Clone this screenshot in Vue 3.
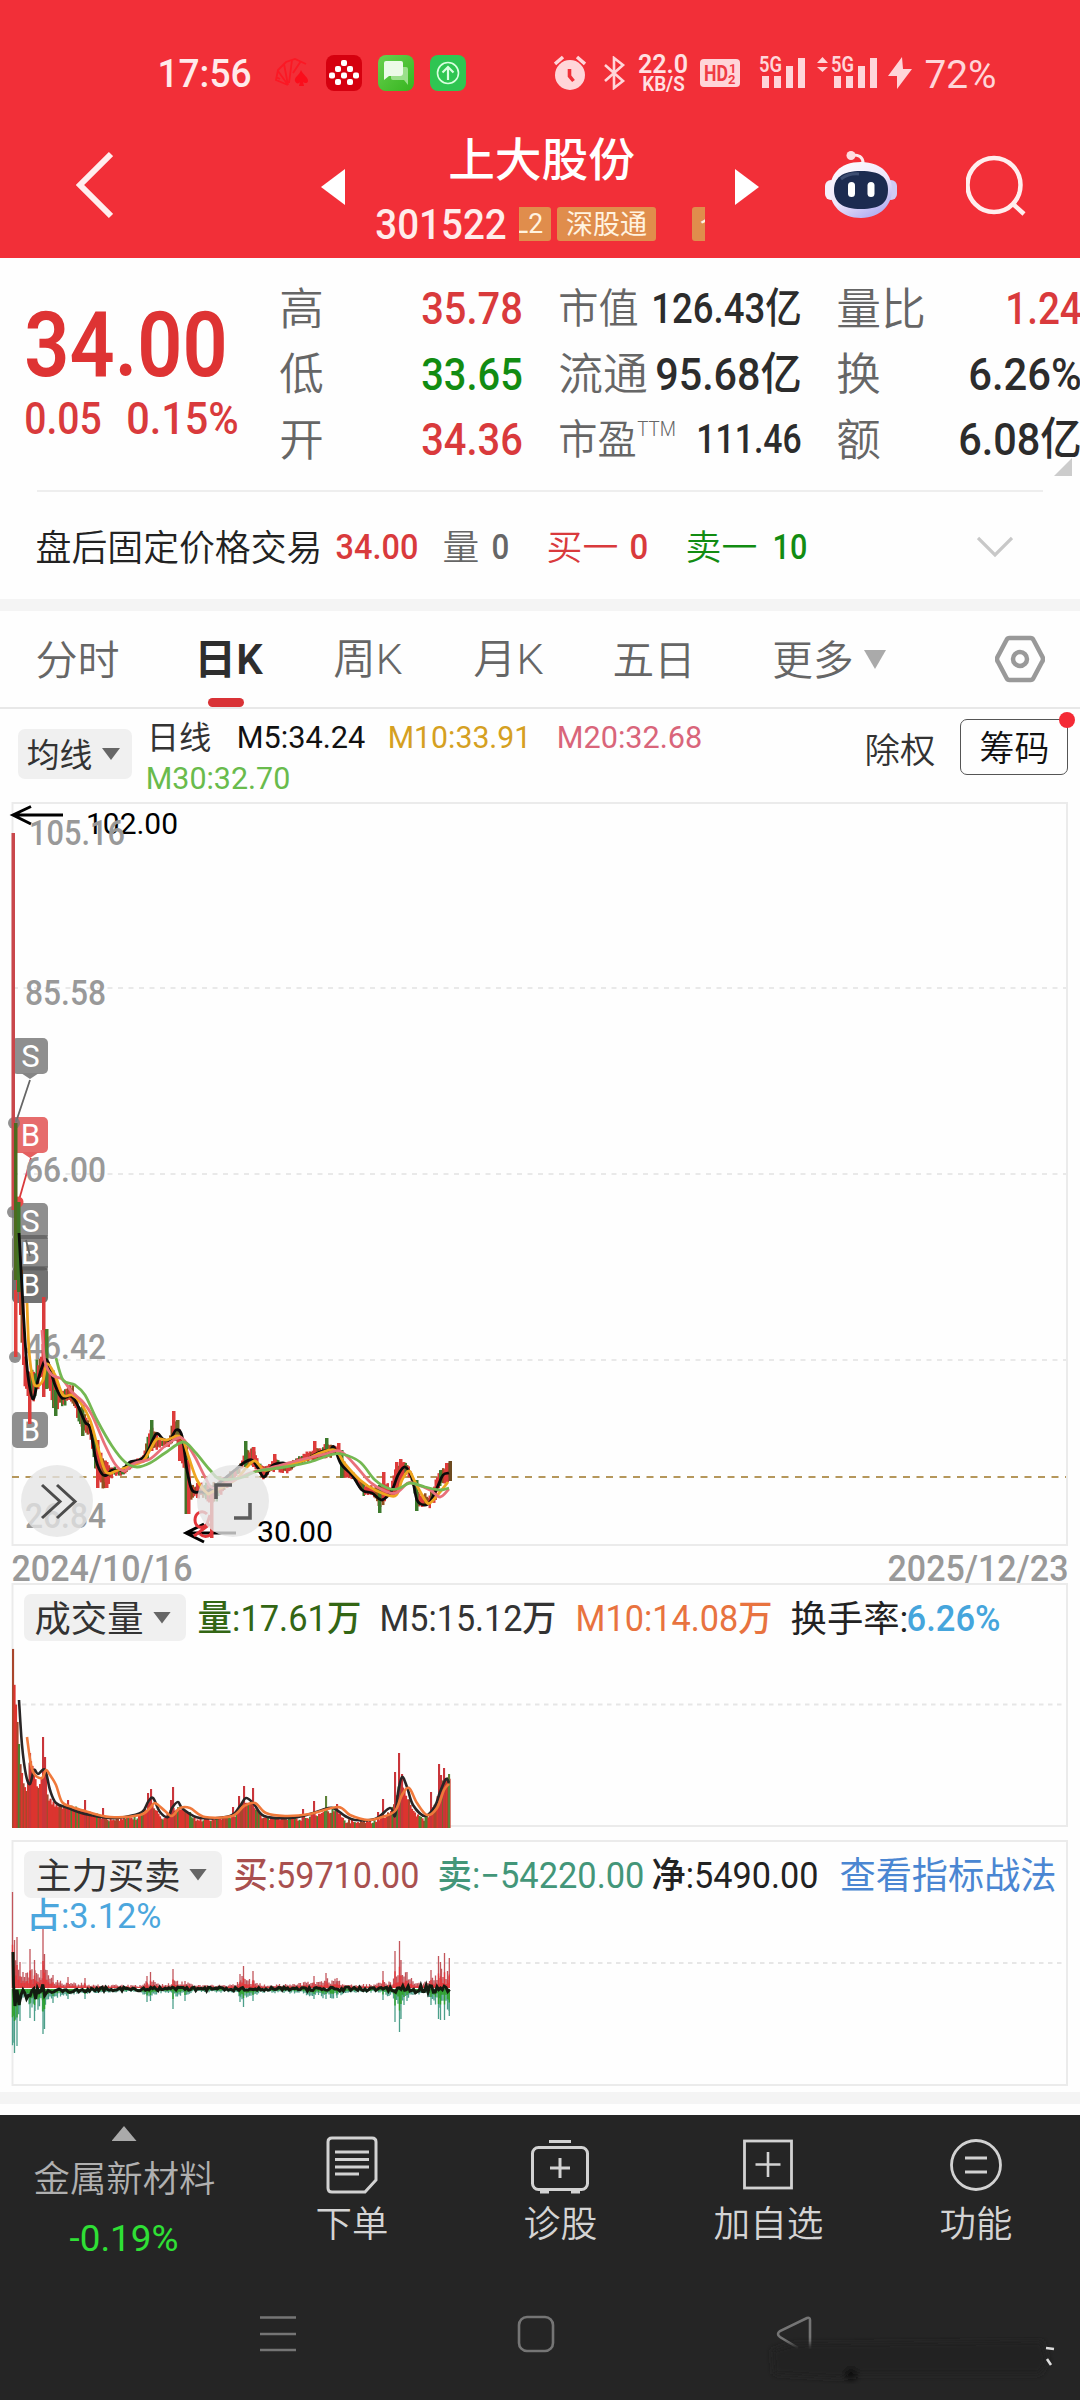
<script setup>
import { h } from 'vue'

// Text run fitted to an exact ink width (condensed DIN-like numerals).
const T = (p) => {
  const latin = /[0-9A-Za-z]/.test(p.v)
  const pad = p.s * 0.04
  return h('svg', { class: 'fit', width: p.w, height: p.s, style: { display: 'block', overflow: 'visible', flex: 'none' } }, [
    h('text', {
      x: -pad, y: p.s * (latin ? 0.856 : 0.88), 'font-size': p.s, fill: p.c || 'currentColor',
      'font-weight': p.b || 400, textLength: +p.w + pad * 2, lengthAdjust: 'spacingAndGlyphs',
    }, p.v),
  ])
}
T.props = ['w', 's', 'v', 'c', 'b']

const RED = '#d93a3c'
const GREEN = '#128c12'
const DARK = '#2c2c2c'

const tools = [
  { name: '下单', w: 70 }, { name: '诊股', w: 71 }, { name: '加自选', w: 107 }, { name: '功能', w: 70 },
]

let seed = 11
const rnd = () => { seed = (seed * 16807) % 2147483647; return seed / 2147483647 }
const pts = (s) => s.split(' ').map((p) => p.split(',').map(Number))
const at = (a, x) => {
  for (let i = 1; i < a.length; i++) {
    if (x <= a[i][0]) {
      const [x0, y0] = a[i - 1], [x1, y1] = a[i]
      return y0 + ((y1 - y0) * Math.max(0, x - x0)) / (x1 - x0)
    }
  }
  return a[a.length - 1][1]
}
const smooth = (s) => {
  const a = pts(s)
  let d = `M${a[0]}`
  for (let i = 0; i < a.length - 1; i++) {
    const p0 = a[i - 1] || a[i], p1 = a[i], p2 = a[i + 1], p3 = a[i + 2] || p2
    d += `C${p1[0] + (p2[0] - p0[0]) / 6},${p1[1] + (p2[1] - p0[1]) / 6} ${p2[0] - (p3[0] - p1[0]) / 6},${p2[1] - (p3[1] - p1[1]) / 6} ${p2}`
  }
  return d
}

const ma5 = '19,1233 21,1270 25,1340 28,1376 33,1399 38,1380 44,1362 48,1362 55,1385 62,1398 70,1396 76,1402 85,1422 90,1428 96,1460 102,1474 107,1475 112,1470 122,1470 130,1462 140,1460 147,1453 156,1434 163,1439 170,1440 176,1430 182,1436 187,1470 192,1490 200,1492 210,1490 235,1470 245,1462 252,1460 258,1468 264,1477 272,1466 283,1463 292,1466 305,1460 320,1452 330,1450 334,1447 341,1464 352,1475 362,1490 372,1493 382,1500 392,1490 398,1475 405,1467 412,1478 417,1500 424,1505 430,1502 437,1488 443,1475 449,1473'
const maLines = [
  { c: '#0b0b0b', d: smooth(ma5) },
  { c: '#efa51f', d: smooth('27,1303 29,1350 33,1380 37,1386 43,1380 47,1364 55,1375 63,1395 72,1395 80,1402 90,1420 98,1448 106,1472 116,1471 130,1466 143,1461 150,1450 157,1439 167,1440 177,1436 183,1440 189,1458 197,1480 207,1493 212,1492 235,1480 247,1467 255,1461 264,1470 275,1468 300,1462 320,1453 335,1450 345,1464 360,1480 375,1490 395,1496 402,1480 409,1471 415,1482 425,1500 430,1503 440,1492 448,1482') },
  { c: '#e9707a', d: smooth('42,1330 45,1362 52,1375 62,1379 72,1392 82,1401 92,1415 105,1445 115,1464 124,1471 135,1463 150,1459 165,1446 178,1438 184,1440 195,1457 205,1477 213,1488 230,1482 250,1473 270,1468 300,1460 325,1454 340,1451 355,1465 370,1482 385,1491 396,1493 408,1483 415,1484 430,1490 440,1497 449,1489') },
  { c: '#74b852', d: smooth('56,1358 63,1380 75,1385 85,1395 97,1420 112,1446 125,1462 137,1467 150,1463 165,1453 183,1442 195,1452 210,1470 220,1479 240,1478 258,1471 285,1467 310,1462 330,1455 342,1454 360,1462 375,1480 390,1489 400,1488 410,1483 425,1487 440,1490 449,1488') },
]

const top = pts('17,1230 20,1250 22,1300 24,1360 30,1372 36,1358 41,1340 45,1345 50,1365 60,1388 71,1382 76,1400 88,1420 95,1440 103,1452 108,1465 120,1468 130,1460 142,1454 148,1430 152,1421 157,1438 168,1440 172,1414 177,1422 183,1440 190,1484 205,1480 215,1482 228,1471 238,1468 245,1445 253,1448 258,1462 266,1466 274,1456 285,1463 296,1457 308,1450 314,1445 320,1448 326,1440 332,1444 339,1446 344,1464 354,1474 364,1484 375,1486 382,1478 390,1486 394,1464 400,1460 407,1462 412,1478 418,1490 428,1494 433,1482 439,1468 445,1462 451,1461')
const bot = pts('17,1300 20,1340 23,1390 28,1406 33,1402 38,1390 44,1382 48,1402 54,1412 62,1408 72,1404 80,1432 88,1436 94,1470 98,1489 106,1488 112,1476 124,1476 132,1466 144,1462 156,1450 170,1446 176,1444 180,1460 184,1476 190,1500 200,1498 210,1504 214,1505 224,1492 240,1470 252,1466 262,1482 270,1472 287,1474 296,1464 310,1462 330,1458 336,1456 342,1478 354,1480 362,1496 372,1496 379,1510 386,1500 396,1494 404,1474 411,1482 416,1509 424,1509 432,1508 438,1492 451,1480')
const candles = []
for (let x = 16; x < 449; x += 1.5) {
  const t = at(top, x), b = at(bot, x), r = b - t
  const y = t + r * 0.3 * rnd()
  const e = b - r * 0.3 * rnd()
  const k = rnd()
  candles.push({ x, y, hh: Math.max(5, e - y), c: k < 0.62 ? '#db3a3a' : k < 0.8 ? '#93501f' : '#3d7a2c' })
}
const spikes = [
  [11.5, 833, 377, '#c9474b'], [14, 1123, 157, '#4c6b1f'], [14, 1290, 67, '#e0403d'], [17, 1202, 90, '#3f7526'],
  [42, 1297, 100, '#d93b3b'], [45, 1329, 60, '#4a7d2c'], [28, 1396, 28, '#dd3b3a'], [54, 1390, 26, '#3d7a2c'],
  [81, 1405, 31, '#4a7028'], [96, 1440, 48, '#dd3b3a'], [105, 1462, 26, '#dd3b3a'], [150, 1420, 28, '#3d7a2c'],
  [172, 1411, 28, '#dd3b3a'], [176, 1420, 18, '#6d6a2a'], [178, 1440, 21, '#dd3b3a'], [184.5, 1446, 68, '#4a7028'],
  [187, 1460, 54, '#dd3b3a'], [210, 1490, 48, '#dd3b3a'], [244, 1441, 26, '#3d7a2c'], [252, 1447, 20, '#dd3b3a'],
  [273, 1454, 16, '#dd3b3a'], [313, 1441, 18, '#dd3b3a'], [325, 1438, 16, '#3d7a2c'], [337, 1443, 16, '#dd3b3a'],
  [340, 1450, 28, '#3d7a2c'], [378, 1485, 28, '#3d7a2c'], [382, 1472, 28, '#dd3b3a'], [415, 1480, 31, '#3d7a2c'],
  [395, 1462, 30, '#dd3b3a'], [399, 1459, 22, '#dd3b3a'], [445, 1463, 16, '#dd3b3a'], [448.5, 1461, 20, '#6c4a20'],
]

const volEnv = pts('13,1646 15,1693 17,1714 19,1742 21,1768 24,1782 27,1786 30,1758 34,1768 38,1785 42,1776 45,1767 48,1795 55,1803 62,1804 70,1804 90,1811 110,1817 135,1816 143,1810 150,1800 156,1808 163,1818 170,1810 176,1805 184,1806 196,1817 225,1816 235,1812 243,1800 252,1802 262,1815 300,1816 320,1811 335,1807 345,1818 370,1820 385,1815 394,1804 400,1780 405,1790 415,1812 425,1817 435,1804 442,1780 449,1775')
const volSpikes = { 43: 1737, 45: 1757, 30: 1753, 68: 1800, 85: 1800, 103: 1808, 148: 1793, 151: 1789, 173: 1787, 171: 1800, 239: 1796, 244: 1786, 253: 1788, 233: 1807, 314: 1801, 326: 1796, 337: 1804, 303: 1809, 383: 1799, 378: 1812, 395: 1772, 399: 1753, 402: 1774, 431: 1792, 439: 1764, 441: 1775, 444: 1768, 449: 1774 }
const vols = []
for (let x = 12; x < 449; x += 1.5) {
  const y = at(volEnv, x + 1) + rnd() * (x < 48 ? 6 : 5)
  const k = rnd()
  vols.push({ x, y, c: k < 0.55 ? '#dc342f' : k < 0.82 ? '#a9462c' : '#4d8130' })
}
Object.entries(volSpikes).forEach(([x, y]) => vols.push({ x: x - 1, y, c: x === '326' || x === '449' ? '#5d8238' : '#c9353a' }))
const volLines = [
  { c: '#2a2626', d: smooth('19,1700 22,1745 26,1775 30,1784 34,1770 38,1774 45,1770 50,1790 56,1803 68,1808 85,1814 110,1818 125,1817 142,1812 148,1802 153,1798 160,1812 168,1817 172,1808 178,1802 183,1809 200,1818 230,1816 240,1806 246,1798 254,1804 264,1816 290,1818 310,1814 322,1810 333,1808 345,1816 355,1820 375,1819 390,1808 395,1816 398,1793 402,1777 407,1787 413,1805 425,1816 435,1806 440,1792 446,1779 449,1783') },
  { c: '#f0793b', d: smooth('27,1737 31,1765 35,1775 42,1778 46,1770 50,1775 56,1785 62,1802 72,1807 85,1811 110,1817 140,1815 150,1808 155,1803 165,1811 172,1816 180,1808 190,1808 205,1817 232,1816 244,1806 255,1803 266,1813 285,1816 310,1814 338,1807 350,1815 368,1820 382,1817 395,1811 402,1795 409,1788 417,1803 427,1815 437,1808 444,1790 449,1784') },
]

const flowEnv = pts('13,60 16,45 20,24 26,17 30,20 36,24 41,22 45,28 49,12 56,9 75,6 100,4 140,3 146,8 152,9 160,4 170,6 175,8 185,7 195,3 235,4 242,12 252,9 262,4 300,5 312,8 328,10 338,9 345,4 375,4 384,7 392,8 397,16 403,20 410,11 420,6 430,9 438,20 445,22 450,22')
const flowSpikes = [[12.5, 96, 55], [14.5, 48, 64], [17, 51, 57], [20, 26, 32], [30, 39, 29], [34.5, 28, 32], [43, 60, 45], [44.5, 34, 40], [53, 13, 14], [68, 11, 10], [85, 10, 10], [147, 12, 13], [150.5, 16, 12], [173, 19, 20], [185, 7, 12], [240, 14, 13], [243.5, 22, 18], [253, 17, 12], [314, 12, 10], [326, 15, 10], [337, 10, 9], [383, 17, 11], [395, 37, 33], [399.5, 47, 43], [401, 28, 30], [407, 16, 12], [431, 18, 16], [438.5, 32, 30], [440.5, 26, 31], [444.5, 35, 31], [449.3, 30, 27]]
const flows = []
for (let x = 12.5; x < 450; x += 1.5) {
  const e = at(flowEnv, x)
  flows.push([x, e * (0.4 + 0.6 * rnd()), e * (0.4 + 0.6 * rnd())])
}
flows.push(...flowSpikes)
const up = flows.map(([x, u]) => `M${x} 1988v${-u}`).join('')
const down = flows.map(([x, , d]) => `M${x} 1989v${d}`).join('')
const upIn = flows.map(([x, u]) => `M${x} 1988v${-u * 0.45}`).join('')
const downIn = flows.map(([x, , d]) => `M${x} 1989v${d * 0.5}`).join('')
let net = 'M13 1952L13.500 1985L15 2006L17 1990L19 2005L21 1995'
for (let x = 23; x < 450; x += 1.8) {
  const a = x < 48 ? 10 : x > 385 ? 5 : 2.4
  net += `L${x.toFixed(1)} ${((x < 90 ? 1991 : 1989) + (rnd() - 0.5) * a * 1.6).toFixed(1)}`
}

const marks = [
  { t: 'S', y: 1038, f: '#858585' }, { t: 'B', y: 1117, f: '#e45f5f' }, { t: 'S', y: 1203, f: '#858585' },
  { t: 'B', y: 1235, f: '#7d7d7d' }, { t: 'B', y: 1267, f: '#666' }, { t: 'B', y: 1412, f: '#858585' },
]
const axis = [['105.16', 29, 845, 96], ['85.58', 25, 1005, 81], ['66.00', 25, 1182, 81], ['46.42', 25, 1359, 81], ['26.84', 25, 1528, 81]]
</script>

<template>
  <div class="page">
    <header class="head">
      <div class="status">
        <div class="st-left">
          <T v="17:56" w="91" s="38" b="500" c="#ffeaea" />
          <svg width="36" height="32" viewBox="0 0 36 32" fill="none" stroke="#fb1824" stroke-width="1.800"><path d="M14 28L2 23l2-10 8-8 9-3 11 5M14 28L4 14M14 28L10 7M15 26L18 3M19 16L27 4M2 20l4 2" /><path d="M27 13c-2 6-7 7-6 11 1 3 4 3 5 1l-1 4h5l-1-4c2 2 5 1 5-1 0-4-5-6-7-11z" fill="#fb0d1b" stroke="none" /></svg>
          <svg width="36" height="36" viewBox="0 0 36 36"><rect width="36" height="36" rx="8" fill="#d5000f" /><g fill="#fff"><rect x="15" y="5" width="6" height="6" rx="2" /><rect x="9" y="11" width="6" height="6" rx="2" /><rect x="21" y="11" width="6" height="6" rx="2" /><rect x="3" y="17.500" width="6" height="6" rx="2" /><rect x="15" y="17.500" width="6" height="6" rx="2" /><rect x="27" y="17.500" width="6" height="6" rx="2" /><rect x="9" y="24" width="6" height="6" rx="2" /><rect x="21" y="24" width="6" height="6" rx="2" /></g></svg>
          <svg width="36" height="36" viewBox="0 0 36 36"><defs><linearGradient id="msg" x2="1" y2="1"><stop stop-color="#6ad04f" /><stop offset="1" stop-color="#35b51f" /></linearGradient></defs><rect width="36" height="36" rx="8" fill="url(#msg)" /><path d="M13 12h15q2 0 2 2v16l-4-5H15q-2 0-2-2z" fill="#9be08b" /><path d="M8 6h15q2 0 2 2v10q0 3-3 3H11l-5 4V8q0-2 2-2z" fill="#ecfbe8" /></svg>
          <svg width="36" height="36" viewBox="0 0 36 36"><rect width="36" height="36" rx="8" fill="#2fc552" /><g fill="none" stroke="#d9ffe0" stroke-width="1.600"><circle cx="18" cy="18" r="10.500" /><path d="M18 25V12M12.500 17.500L18 12l5.500 5.500" stroke-width="2.200" /></g></svg>
        </div>
        <div class="st-right">
          <svg width="32" height="36" viewBox="0 0 32 36"><circle cx="16" cy="20" r="15" fill="#ffd5d9" /><path d="M1 9l8-7M31 9l-8-7" stroke="#ffd5d9" stroke-width="3.500" /><path d="M15.500 14v7l4 5" stroke="#f02f38" stroke-width="3.600" fill="none" /></svg>
          <svg class="bt" width="22" height="34" viewBox="0 0 22 34" fill="none" stroke="#ffd5d9" stroke-width="2.600"><path d="M1 9l18 16-9 7V2l9 7L1 25" /></svg>
          <div class="net"><T v="22.0" w="48" s="26" b="600" c="#ffe0e2" /><T v="KB/S" w="41" s="20" b="600" c="#ffe0e2" /></div>
          <svg class="hd" width="40" height="28" viewBox="0 0 40 28"><rect width="40" height="28" rx="4" fill="#ffd5d9" /><g fill="#ef3b44" font-weight="700"><text x="4" y="22" font-size="22" textLength="24" lengthAdjust="spacingAndGlyphs">HD</text><text x="29" y="14" font-size="13">1</text><text x="28" y="25" font-size="13">2</text></g></svg>
          <svg class="sig" width="46" height="34" viewBox="0 0 46 34" fill="#ffd5d9"><text x="0" y="15.500" font-size="21.500" font-weight="600" textLength="23" lengthAdjust="spacingAndGlyphs">5G</text><path d="M3 20h7v12H3zM15 20h7v12h-7zM27 14l0-4h7v22h-7zM39 2h7v30h-7z" /></svg>
          <svg class="sig2" width="60" height="34" viewBox="0 0 60 34" fill="#ffd5d9"><path d="M0 7L5.500 1 11 7zM0 11h11L5.500 16z" /><text x="14" y="15.500" font-size="21.500" font-weight="600" textLength="23" lengthAdjust="spacingAndGlyphs">5G</text><path d="M17 20h7v12h-7zM29 20h7v12h-7zM41 10h7v22h-7zM53 2h7v30h-7z" /></svg>
          <svg class="bolt" width="24" height="34" viewBox="0 0 24 34"><path d="M14 1L0 20h9v13l15-20h-9z" fill="#ffd5d9" /></svg>
          <T class="pct" v="72%" w="69" s="38" c="#ffd5d9" />
        </div>
      </div>
      <div class="nav">
        <svg width="37" height="68" viewBox="0 0 37 68" fill="none" stroke="#ffeeee" stroke-width="6"><path d="M35 3L4 34l31 31" /></svg>
        <svg class="prev" width="24" height="36"><path d="M24 0v36L0 18z" fill="#fff" /></svg>
        <div class="title">
          <T v="上大股份" w="183" s="46" b="500" c="#fff" />
          <div class="code">
            <T v="301522" w="128" s="42" b="500" c="#ffeceb" />
            <div class="tag lv"><T v="L2" w="27" s="27" c="#fff3e0" /></div>
            <div class="tag sz"><T v="深股通" w="79" s="27" c="#fff3e0" /></div>
            <div class="tag cut"><T v="个" w="24" s="27" c="#fff3e0" /></div>
          </div>
        </div>
        <svg class="next" width="24" height="36"><path d="M0 0v36l24-18z" fill="#fff" /></svg>
        <svg class="bot" width="72" height="68" viewBox="0 0 72 68">
          <defs><linearGradient id="shell" x2=".6" y2="1"><stop stop-color="#fff" /><stop offset=".6" stop-color="#eee6fb" /><stop offset="1" stop-color="#b6b2f2" /></linearGradient></defs>
          <path d="M26 4q12-1 12 8" stroke="#ffe9ec" stroke-width="3" fill="none" /><circle cx="26" cy="4.500" r="4.500" fill="#ffdde0" />
          <rect x="0" y="29" width="12" height="20" rx="6" fill="#f4f0fb" /><rect x="60" y="29" width="12" height="20" rx="6" fill="#cfcbf5" />
          <path d="M36 11c22 0 31 14 31 28S56 67 36 67 5 54 5 39s9-28 31-28z" fill="url(#shell)" />
          <path d="M36 20c19 0 27 6 27 19s-8 19-27 19S9 51 9 39s8-19 27-19z" fill="#1c2b50" />
          <path d="M16 28q8-6 18-5" stroke="#4b5c80" stroke-width="3" fill="none" opacity=".7" />
          <rect x="23" y="31" width="7" height="15" rx="3.500" fill="#fff" /><rect x="42.500" y="31" width="7" height="15" rx="3.500" fill="#fff" />
        </svg>
        <svg class="search" width="60" height="62" viewBox="0 0 60 62" fill="none" stroke="#ffeeee" stroke-width="4.500"><ellipse cx="28" cy="30" rx="26.500" ry="27" /><path d="M47 49l11 10" /></svg>
      </div>
    </header>

    <section class="quote">
      <div class="price">
        <T v="34.00" w="196" s="91" b="600" c="#de3333" />
        <div class="chg"><T v="0.05" w="74" s="45" b="500" :c="RED" /><T v="0.15%" w="109" s="45" b="500" :c="RED" /></div>
      </div>
      <div class="stats a">
        <div><T v="高" w="41" s="44" b="350" /><T v="35.78" w="98" s="45" b="500" :c="RED" /></div>
        <div><T v="低" w="41" s="44" b="350" /><T v="33.65" w="98" s="45" b="500" :c="GREEN" /></div>
        <div><T v="开" w="41" s="44" b="350" /><T v="34.36" w="98" s="45" b="500" :c="RED" /></div>
      </div>
      <div class="stats b">
        <div><T v="市值" w="77" s="41" b="350" /><T v="126.43亿" w="147" s="42" b="500" :c="DARK" /></div>
        <div><T v="流通" w="86" s="44" b="350" /><T v="95.68亿" w="143" s="45" b="500" :c="DARK" /></div>
        <div><span class="pe"><T v="市盈" w="75" s="41" b="350" /><T v="TTM" w="37" s="21" b="300" /></span><T v="111.46" w="102" s="41" b="500" :c="DARK" /></div>
      </div>
      <div class="stats c">
        <div><T v="量比" w="86" s="44" b="350" /><T v="1.24" w="73" s="45" b="500" :c="RED" /></div>
        <div><T v="换" w="41" s="44" b="350" /><T v="6.26%" w="110" s="45" b="500" :c="DARK" /></div>
        <div><T v="额" w="41" s="44" b="350" /><T v="6.08亿" w="120" s="45" b="500" :c="DARK" /></div>
      </div>
      <i class="corner"></i>
    </section>

    <section class="after">
      <T v="盘后固定价格交易" w="284" s="36" b="350" c="#222" />
      <T class="g16" v="34.00" w="80" s="35" b="500" :c="RED" />
      <T class="g27" v="量" w="34" s="35" b="350" c="#666" />
      <T class="g15" v="0" w="15" s="35" b="500" c="#666" />
      <T class="g40" v="买一" w="69" s="35" b="350" :c="RED" />
      <T class="g14" v="0" w="16" s="35" b="500" :c="RED" />
      <T class="g40" v="卖一" w="69" s="35" b="350" :c="GREEN" />
      <T class="g17" v="10" w="32" s="35" b="500" :c="GREEN" />
      <svg class="chev" width="36" height="22" viewBox="0 0 36 22" fill="none" stroke="#c8c8c8" stroke-width="3.200"><path d="M1 2l17 17L35 2" /></svg>
    </section>

    <nav class="tabs">
      <T v="分时" w="81" s="41" b="350" />
      <div class="on"><T v="日K" w="65" s="42" b="600" c="#2e2e2e" /><i></i></div>
      <T class="t3" v="周K" w="66" s="42" b="350" />
      <T class="t4" v="月K" w="67" s="42" b="350" />
      <T class="t5" v="五日" w="80" s="41" b="350" />
      <T class="t6" v="更多" w="78" s="41" b="350" />
      <svg class="t7" width="22" height="19"><path d="M0 0h22L11 19z" fill="#aaa" /></svg>
      <svg class="t8" width="50" height="48" viewBox="0 0 50 48" fill="none" stroke="#999"><path d="M14.500 3h21q2 0 3 2l8.500 16q2 3 0 6L38.500 43q-1 2-3 2h-21q-2 0-3-2L3 27q-2-3 0-6L11.500 5q1-2 3-2z" stroke-width="4.500" /><circle cx="25" cy="24" r="7" stroke-width="4.500" /></svg>
    </nav>

    <section class="legend">
      <div class="pill ma"><T v="均线" w="63" s="33" b="400" c="#333" /><i class="tri"></i></div>
      <div class="vals">
        <div><T v="日线" w="62" s="32" c="#333" /><T class="m1" v="M5:34.24" w="126" s="32" c="#111" /><T class="m2" v="M10:33.91" w="141" s="32" b="450" c="#d5a021" /><T class="m3" v="M20:32.68" w="143" s="32" b="450" c="#d9657a" /></div>
        <T v="M30:32.70" w="142" s="32" b="450" c="#69bb4c" />
      </div>
      <T class="cq" v="除权" w="68" s="35" b="350" c="#333" />
      <div class="chip"><T v="筹码" w="67" s="35" b="350" c="#111" /><i></i></div>
    </section>

    <section class="kchart">
      <svg width="1080" height="745" viewBox="0 801 1080 745">
        <rect x="12.500" y="803" width="1054.500" height="742" fill="none" stroke="#ebebeb" stroke-width="2" />
        <path d="M13 988H1066M13 1174H1066M13 1360H1066" stroke="#e9e9e9" stroke-width="2" stroke-dasharray="5 5.500" />
        <path d="M12 1477H1066" stroke="#b5975b" stroke-width="1.800" stroke-dasharray="7 6.500" />
        <g stroke="#000" stroke-width="3" fill="none"><path d="M63 815H14M31 806.500L13 815l18 9" /><path d="M236 1533H187M204 1524l-18 9 18 9" /></g>
        <text x="86" y="833.500" font-size="30" textLength="92" lengthAdjust="spacingAndGlyphs">102.00</text>
        <g>
          <g v-for="(m, i) in marks" :key="i">
            <rect x="12" :y="m.y" width="36" height="36" rx="5" :fill="m.f" fill-opacity=".92" />
            <path v-if="i < 2" :d="`M21 ${m.y + 35}l9 6 9-6z`" :fill="m.f" />
            <text x="30.500" :y="m.y + 29" font-size="31" text-anchor="middle" fill="#fff">{{ m.t }}</text>
          </g>
          <path d="M30 1080L16 1122M26 1240l4 16" stroke="#666" stroke-width="1.800" /><path d="M31 1158L19 1200" stroke="#d93a3c" stroke-width="1.800" />
          <path d="M15 1237h33M15 1268h33" stroke="#555" stroke-width="4" opacity=".5" />
          <g fill="#777" opacity=".8"><circle cx="14" cy="1123" r="6" /><circle cx="13" cy="1212" r="6" /><circle cx="15" cy="1357" r="6" /></g><circle cx="18" cy="1202" r="5.500" fill="#ec4a4a" />
        </g>
        <g fill="#999" font-size="35" font-weight="500">
          <text v-for="a in axis" :key="a[0]" :x="a[1]" :y="a[2]" :textLength="a[3]" lengthAdjust="spacingAndGlyphs">{{ a[0] }}</text>
        </g>
        <rect v-for="(k, i) in candles" :key="'k' + i" :x="k.x" :y="k.y" width="2.500" :height="k.hh" :fill="k.c" />
        <rect v-for="(k, i) in spikes" :key="'s' + i" :x="k[0]" :y="k[1]" width="3.500" :height="k[2]" :fill="k[3]" />
        <path v-for="l in maLines" :key="l.c" :d="l.d" fill="none" :stroke="l.c" stroke-width="2.800" stroke-linejoin="round" />
        <path d="M207 1514c-5-5-12-1-12 6s7 10 12 4l3-9M194 1536l16-12M200 1534c4 4 10 3 12-2" fill="none" stroke="#e2353a" stroke-width="3" />
        <g fill="#e4e4e4" fill-opacity=".78"><circle cx="57" cy="1501" r="36" /><circle cx="233" cy="1501" r="36" /></g>
        <path d="M42 1485l18 16.500L42 1518M57 1485l18 16.500L57 1518" fill="none" stroke="#4c4c4c" stroke-width="3" />
        <path d="M216 1499v-14h16M234 1518h16v-15" fill="none" stroke="#5c5c5c" stroke-width="3.600" />
        <text x="257" y="1542" font-size="30" textLength="76" lengthAdjust="spacingAndGlyphs">30.00</text>
      </svg>
    </section>
    <div class="dates"><T v="2024/10/16" w="178" s="36" b="500" c="#999" /><T v="2025/12/23" w="178" s="36" b="500" c="#999" /></div>

    <section class="panel vol">
      <svg class="plot" width="1080" height="246" viewBox="0 1583 1080 246">
        <rect x="12.500" y="1584" width="1054.500" height="242" fill="none" stroke="#ebebeb" stroke-width="2" />
        <path d="M13 1704.500H1066" stroke="#e6e6e6" stroke-width="2" stroke-dasharray="4.500 4.500" />
        <rect v-for="(k, i) in vols" :key="i" :x="k.x" :y="k.y" width="2.100" :height="1828 - k.y" :fill="k.c" />
        <path v-for="l in volLines" :key="l.c" :d="l.d" fill="none" :stroke="l.c" stroke-width="2.600" />
      </svg>
      <div class="info">
        <div class="pill cj"><T v="成交量" w="106" s="36" c="#333" /><i class="tri"></i></div>
        <T v="量:17.61万" w="161" s="36" b="450" c="#336614" />
        <T class="v2" v="M5:15.12万" w="174" s="36" b="450" c="#333" />
        <T class="v3" v="M10:14.08万" w="194" s="36" b="450" c="#e8733f" />
        <T class="v4" v="换手率:" w="115" s="36" c="#222" />
        <T class="v5" v="6.26%" w="91" s="36" b="500" c="#45a5dc" />
      </div>
    </section>

    <section class="panel flow">
      <svg class="plot" width="1080" height="247" viewBox="0 1840 1080 247">
        <rect x="12.500" y="1841" width="1054.500" height="244" fill="none" stroke="#ebebeb" stroke-width="2" />
        <path d="M13 1963H1066" stroke="#e6e6e6" stroke-width="2" stroke-dasharray="4.500 4.500" />
        <path :d="up" stroke="#c2555b" stroke-width="1.300" /><path :d="upIn" stroke="#e2383c" stroke-width="1.400" />
        <path :d="down" stroke="#4c9f8a" stroke-width="1.300" /><path :d="downIn" stroke="#2fa12f" stroke-width="1.400" />
        <path :d="net" fill="none" stroke="#131c10" stroke-width="3" />
      </svg>
      <div class="info">
        <div class="pill zl"><T v="主力买卖" w="142" s="36" c="#333" /><i class="tri"></i></div>
        <T v="买:59710.00" w="183" s="36" b="450" c="#a9504f" />
        <T class="v2" v="卖:−54220.00" w="204" s="36" b="450" c="#439679" />
        <T class="f3" v="净:5490.00" w="164" s="36" b="450" c="#222" />
        <T class="f4" v="查看指标战法" w="214" s="37" c="#4a86d2" />
      </div>
      <T class="zhan" v="占:3.12%" w="132" s="35" b="450" c="#4ba6dd" />
    </section>
    <div class="band"></div>

    <footer class="foot">
      <div class="bar">
        <div class="sector"><i></i><T v="金属新材料" w="179" s="36" b="350" c="#b0b0b0" /><T v="-0.19%" w="106" s="37" c="#2fe035" /></div>
        <div v-for="(t, i) in tools" :key="t.name" class="tool">
          <svg width="60" height="60" viewBox="0 0 60 60" fill="none" stroke="#d2d2d2" stroke-width="3">
            <g v-if="i === 0"><path d="M10 3h40q4 0 4 4v38L43 57H10q-4 0-4-4V7q0-4 4-4z" /><path d="M13 17h34M13 24.500h34M13 32h34M13 39h24" stroke-width="2.800" /></g>
            <g v-else-if="i === 1"><rect x="2.500" y="12.500" width="55" height="42" rx="6" /><path d="M19 6.500h22M30 23v20M20 33h20M10 57h9M41 57h9" /></g>
            <g v-else-if="i === 2"><rect x="6.500" y="6" width="47" height="47" stroke-width="2.800" /><path d="M30 17v25M17.500 29.500h25" stroke-width="2.600" /></g>
            <g v-else><circle cx="30" cy="30" r="24.500" stroke-width="2.800" /><path d="M19 23h22M19 37h22" /></g>
          </svg>
          <T :v="t.name" :w="t.w" s="36" b="350" c="#d4d4d4" />
        </div>
      </div>
      <svg class="sys" width="1080" height="120" viewBox="0 2280 1080 120" fill="none" stroke="#757575" stroke-width="2.600">
        <defs><filter id="soft"><feGaussianBlur stdDeviation="3" /></filter></defs>
        <path d="M260 2317.500h36M260 2334h36M260 2350h36" /><rect x="519" y="2317" width="34" height="34" rx="8" />
        <path d="M810 2349v-29q0-3-3-2l-27 13q-4 3 0 6l18 11" />
        <g filter="url(#soft)" stroke="none"><path d="M772 2350l20-6 250-3 6 20-8 13-180 0-20 4-66-4z" fill="#202020" /><circle cx="851" cy="2374" r="6" fill="#111" /></g>
        <path d="M1046 2348l8 1M1047 2359l4 6" stroke="#ddd" />
      </svg>
    </footer>
  </div>
</template>

<style>
body { background: #fff; }
</style>

<style scoped>
.page { width: 1080px; height: 2400px; overflow: hidden; background: #fefefe; display: flex; flex-direction: column; font-family: Roboto, "Noto Sans CJK SC", sans-serif; color: #666; }
svg { display: block; flex: none; }
i { display: block; flex: none; }
.head { height: 258px; background: #f22f38; }
.status { height: 112px; padding: 33px 85px 0 159px; box-sizing: border-box; display: flex; justify-content: space-between; }
.st-left { display: flex; align-items: center; height: 79px; gap: 16px; }
.st-left .fit { margin-right: 8px; }
.st-right { display: flex; align-items: center; height: 79px; }
.bt { margin-left: 18px; }
.net { margin-left: 13px; display: flex; flex-direction: column; align-items: center; gap: 0; width: 48px; padding-bottom: 1px; }
.net .fit + .fit { margin-top: -3px; }
.hd { margin-left: 13px; }
.sig { margin-left: 19px; overflow: visible; }
.sig2 { margin-left: 12px; overflow: visible; }
.bolt { margin-left: 11px; }
.pct { margin: 3px 0 0 14px; }
.nav { height: 146px; padding-left: 76px; display: flex; align-items: center; }
.prev { margin-left: 208px; margin-top: 3px; }
.title { width: 328px; margin-left: 32px; padding-top: 10px; display: flex; flex-direction: column; align-items: center; gap: 21px; }
.code { width: 328px; display: flex; align-items: center; height: 42px; }
.tag { height: 34px; background: #e08d4c; border-radius: 3px; display: flex; align-items: center; overflow: hidden; box-sizing: border-box; }
.lv { width: 32px; margin-left: 14px; justify-content: flex-end; padding-right: 9px; border-radius: 0 3px 3px 0; }
.sz { width: 99px; margin-left: 6px; justify-content: center; }
.cut { width: 13px; margin-left: 36px; padding-left: 9px; border-radius: 3px 0 0 3px; }
.next { margin-left: 30px; margin-top: 3px; }
.bot { margin-left: 66px; }
.search { margin-left: 69px; margin-top: 2px; }
.quote { height: 232px; box-sizing: border-box; display: flex; position: relative; padding-top: 17px; }
.price { width: 281px; padding: 23px 0 0 28px; box-sizing: border-box; display: flex; flex-direction: column; gap: 6px; }
.chg { display: flex; gap: 28px; margin-left: -2px; }
.stats { display: flex; flex-direction: column; height: 197px; }
.stats > div { height: 65.500px; display: flex; justify-content: space-between; align-items: center; }
.a { width: 240px; }
.b { width: 240px; margin-left: 39px; }
.c { width: 242px; margin-left: 38px; }
.pe { display: flex; gap: 3px; align-items: flex-start; }
.corner { position: absolute; left: 1054px; top: 200px; width: 18px; height: 18px; background: #ccc; clip-path: polygon(100% 0, 100% 100%, 0 100%); }
.after { height: 109px; margin: 0 37px; border-top: 2px solid #eee; box-sizing: border-box; display: flex; align-items: center; padding-top: 2px; }
.g14 { margin-left: 14px; } .g15 { margin-left: 15px; } .g16 { margin-left: 16px; } .g17 { margin-left: 18px; }
.g27 { margin-left: 27px; } .g40 { margin-left: 40px; }
.chev { margin-left: auto; margin-right: 30px; }
.tabs { height: 96px; border-top: 12px solid #f4f4f4; border-bottom: 2px solid #e8e8e8; padding-left: 37px; display: flex; align-items: center; }
.on { margin-left: 78px; height: 96px; display: flex; align-items: center; position: relative; }
.on i { position: absolute; left: 12px; bottom: 0; width: 36px; height: 9px; border-radius: 5px; background: #d93236; }
.t3 { margin-left: 74px; } .t4 { margin-left: 74px; } .t5 { margin-left: 72px; } .t6 { margin-left: 80px; } .t7 { margin-left: 12px; } .t8 { margin-left: 109px; }
.legend { height: 92px; display: flex; padding-left: 18px; }
.pill { background: #f0f0f0; border-radius: 7px; display: flex; align-items: center; justify-content: space-between; box-sizing: border-box; flex: none; }
.tri { width: 18px; height: 12px; background: #666; clip-path: polygon(0 0, 100% 0, 50% 100%); }
.ma { width: 114px; height: 50px; padding: 0 12px 0 10px; margin-top: 20px; }
.vals { margin: 12px 0 0 15px; width: 560px; display: flex; flex-direction: column; gap: 9px; }
.vals > div { display: flex; align-items: center; margin-left: 1px; }
.m1 { margin-left: 28px; } .m2 { margin-left: 25px; } .m3 { margin-left: 28px; }
.cq { margin: 23px 0 0 159px; }
.chip { margin: 10px 0 0 26px; width: 108px; height: 56px; border: 1.5px solid #555; border-radius: 7px; box-sizing: border-box; position: relative; display: flex; align-items: center; justify-content: center; }
.chip i { position: absolute; right: -8px; top: -8px; width: 16px; height: 16px; border-radius: 50%; background: #f42a35; }
.kchart { height: 745px; }
.dates { height: 37px; display: flex; justify-content: space-between; align-items: center; padding: 7px 13px 0; box-sizing: border-box; }
.panel { position: relative; }
.plot { position: absolute; left: 0; top: 0; }
.vol { height: 257px; }
.info { position: relative; display: flex; align-items: center; padding: 11px 0 0 24px; }
.pill.cj { width: 162px; height: 47px; padding: 0 15px 0 12px; margin-right: 13px; }
.pill.zl { width: 198px; height: 47px; padding: 0 15px 0 13px; margin-right: 13px; }
.v2 { margin-left: 21px; } .v3 { margin-left: 22px; } .v4 { margin-left: 21px; } .v5 { margin-left: 1px; }
.flow { height: 252px; }
.f3 { margin-left: 10px; } .f4 { margin-left: 24px; }
.zhan { position: relative; margin-left: 28px; }
.band { height: 12px; background: #f4f4f4; flex: none; }
.foot { height: 296px; margin-top: 11px; background: #252525; flex: none; }
.bar { height: 165px; display: flex; align-items: flex-start; }
.sector { width: 248px; display: flex; flex-direction: column; align-items: center; padding-top: 11px; }
.sector i { width: 25px; height: 15px; margin-bottom: 19px; background: #aaa; clip-path: polygon(50% 0, 100% 100%, 0 100%); }
.sector .fit + .fit { margin-top: 23px; }
.tool { width: 208px; padding-top: 20px; display: flex; flex-direction: column; align-items: center; gap: 10px; }
.head, .quote, .after, .tabs, .legend, .kchart, .dates, .panel { flex: none; }
</style>
